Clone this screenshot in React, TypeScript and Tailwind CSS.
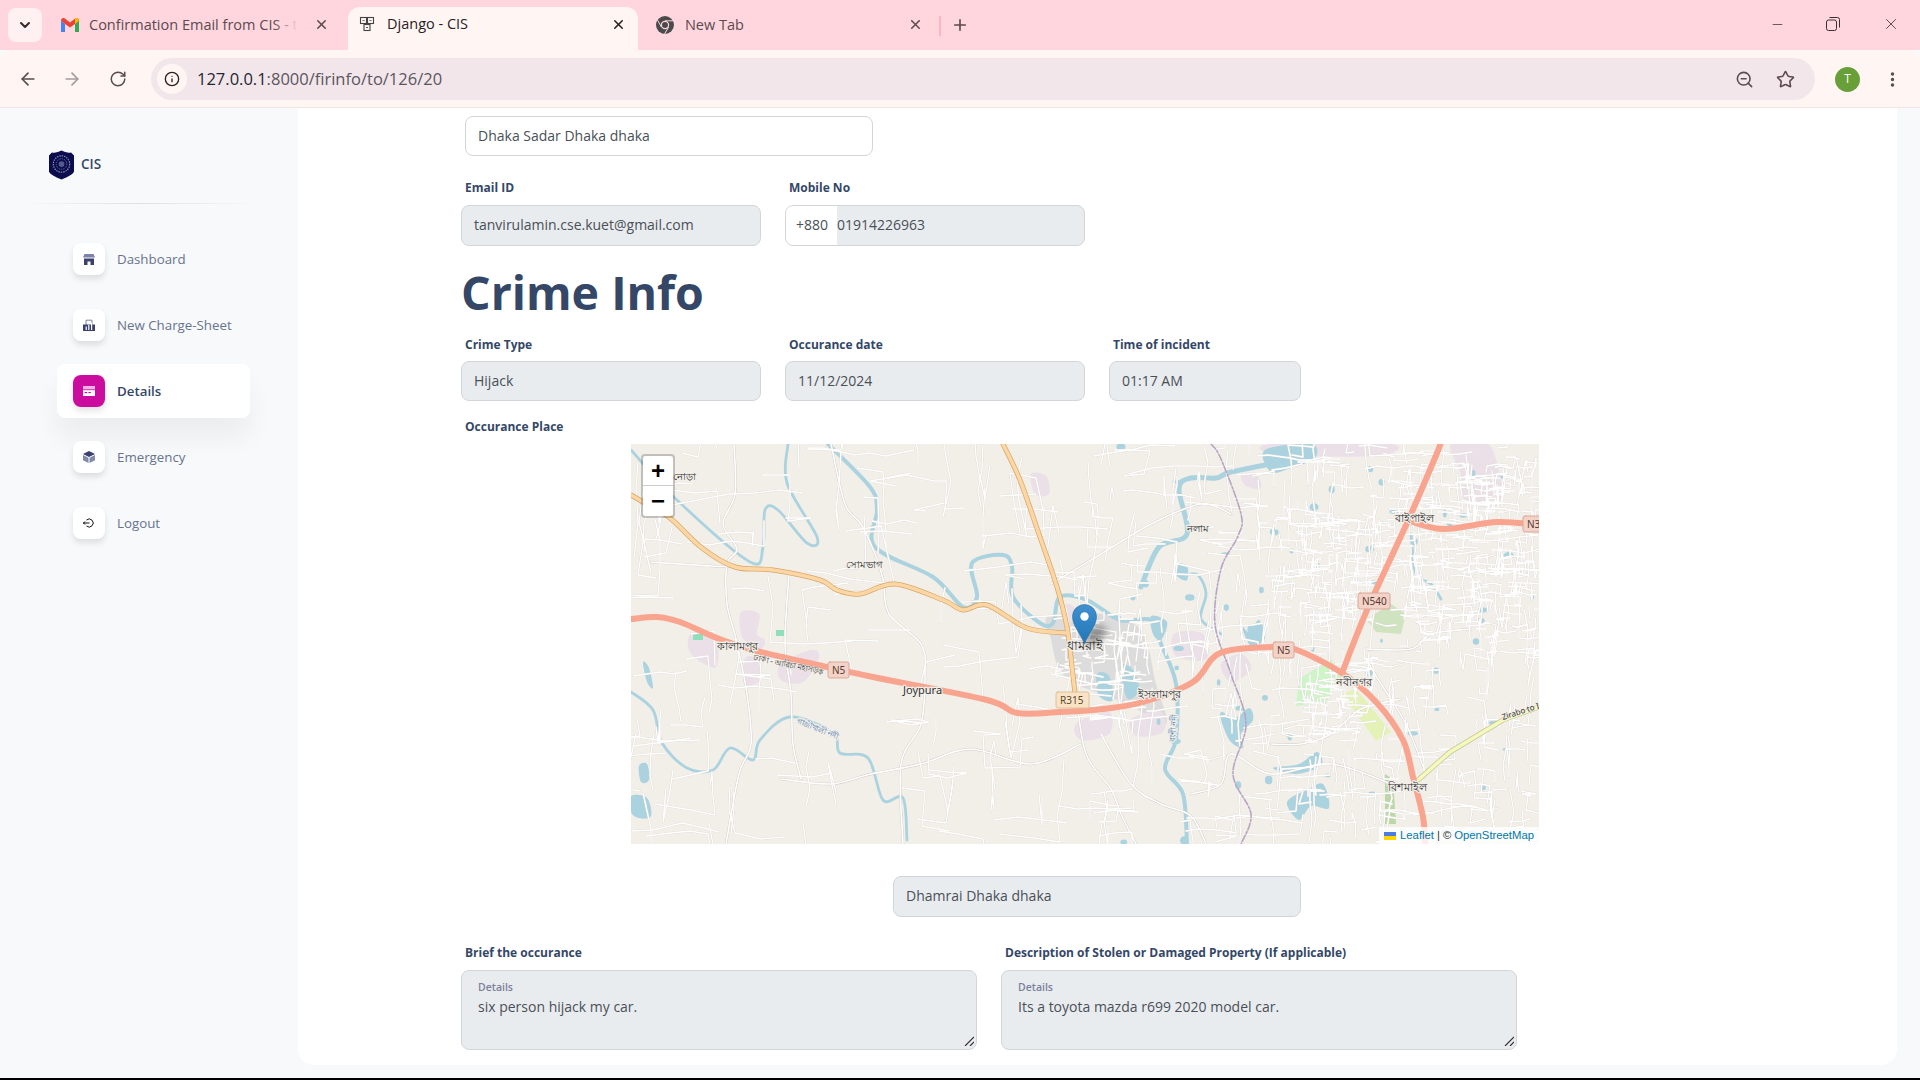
import { ArrowLeft, ArrowRight, ChevronDown, Info, Minus, MoreVertical, Plus, RotateCw, Star, X, ZoomOut } from "lucide-react";

const pts = (a: number[][]) => a.map((p) => p.join(",")).join(" ");

// catmull-rom through the points, so rivers and roads don't look like zigzags
function smooth(a: number[][], closed = false) {
  const at = (i: number) => (closed ? a[(i + a.length) % a.length] : a[Math.max(0, Math.min(a.length - 1, i))]);
  let d = `M${a[0][0]} ${a[0][1]}`;
  const end = closed ? a.length : a.length - 1;
  for (let i = 0; i < end; i++) {
    const [p0, p1, p2, p3] = [at(i - 1), at(i), at(i + 1), at(i + 2)];
    const c1x = p1[0] + (p2[0] - p0[0]) / 6;
    const c1y = p1[1] + (p2[1] - p0[1]) / 6;
    const c2x = p2[0] - (p3[0] - p1[0]) / 6;
    const c2y = p2[1] - (p3[1] - p1[1]) / 6;
    d += `C${c1x.toFixed(1)} ${c1y.toFixed(1)} ${c2x.toFixed(1)} ${c2y.toFixed(1)} ${p2[0]} ${p2[1]}`;
  }
  return closed ? d + "Z" : d;
}

// map data, in px inside the 908x400 map pane
const orangeRoads = [
  [[0, 51], [12, 58], [39, 74], [71, 104], [104, 123], [142, 126], [189, 136], [206, 146], [229, 150], [264, 140], [312, 156], [332, 166], [356, 161], [396, 184], [436, 189]],
  [[372, 0], [389, 36], [409, 93], [426, 143], [436, 183], [441, 223], [444, 249]],
];
const redRoads = [
  [[0, 175], [26, 173], [49, 178], [86, 194], [122, 206], [196, 223], [242, 233], [356, 256], [386, 269], [429, 268], [472, 265], [512, 258], [562, 238], [589, 209], [642, 203], [666, 206], [711, 229], [746, 259], [772, 296], [782, 333], [792, 373], [794, 400]],
  [[711, 229], [736, 166], [776, 79], [806, 9], [809, 0]],
  [[776, 76], [812, 85], [866, 78], [908, 81]],
];
const rivers = [
  [[0, 6], [46, 56], [119, 118], [132, 103], [134, 66], [147, 66], [176, 99], [186, 93], [156, 39], [157, 0]],
  [[197, 0], [239, 43], [246, 66], [244, 103], [302, 133], [332, 163], [346, 153], [341, 119], [372, 111], [381, 123], [382, 153], [409, 179], [422, 179], [429, 153], [456, 156], [489, 176], [520, 176], [530, 200], [545, 240], [545, 295], [534, 325], [552, 350], [556, 400]],
  [[0, 248], [22, 266], [31, 299], [56, 324], [82, 326], [99, 304], [122, 316], [129, 296], [159, 273], [202, 289], [209, 309], [237, 314], [252, 356], [272, 354], [276, 396]],
  [[510, 143], [528, 103], [556, 90], [548, 45], [560, 34], [585, 34], [600, 28], [650, 18]],
  [[560, 130], [568, 132], [575, 150], [570, 175], [590, 190]],
  [[780, 90], [785, 130], [800, 140], [810, 155]],
];
const lakes = [
  [[634, 6], [680, 0], [684, 14], [660, 24], [640, 28]],
  [[590, 268], [604, 274], [618, 264], [622, 276], [610, 290], [612, 304], [600, 298], [592, 282]],
  [[642, 324], [668, 320], [686, 308], [690, 322], [664, 330]],
  [[656, 358], [676, 346], [692, 340], [698, 364], [680, 362], [668, 376]],
  [[490, 222], [502, 226], [508, 246], [496, 254]],
  [[466, 230], [478, 232], [482, 256], [468, 252]],
  [[0, 352], [16, 354], [20, 372], [8, 374], [0, 368]],
  [[8, 322], [16, 320], [18, 336], [10, 338]],
  [[12, 218], [18, 224], [22, 244], [16, 238]],
  [[546, 120], [556, 122], [556, 136], [546, 132]],
  [[610, 180], [618, 188], [628, 176], [634, 194], [620, 202]],
  [[520, 172], [536, 178], [530, 196], [522, 190]],
];
const pinks = [
  [[110, 168], [128, 170], [126, 190], [134, 196], [130, 205], [118, 200], [110, 190]],
  [[60, 190], [84, 190], [86, 222], [70, 218], [58, 206]],
  [[114, 214], [128, 216], [130, 236], [114, 240]],
  [[150, 220], [180, 206], [188, 214], [172, 238], [150, 236]],
  [[445, 280], [478, 268], [478, 290], [450, 296]],
  [[400, 30], [415, 32], [418, 50], [404, 50]],
  [[435, 160], [445, 165], [445, 178], [436, 175]],
  [[500, 275], [530, 268], [532, 288], [505, 292]],
  [[590, 220], [610, 210], [620, 225], [600, 238]],
  [[640, 0], [760, 0], [745, 12], [645, 10]],
  [[820, 0], [858, 0], [870, 58], [835, 58], [830, 30]],
  [[543, 190], [572, 190], [575, 215], [545, 212]],
  [[610, 30], [625, 30], [630, 44], [615, 42]],
];

const minorRoads = [
  [[103, 0], [104, 50], [92, 80], [106, 105], [96, 120], [96, 160], [105, 195], [116, 250], [120, 300], [108, 330], [95, 400]],
  [[200, 0], [214, 60], [230, 80], [244, 110], [252, 135], [258, 170], [290, 200], [294, 230], [290, 280], [270, 320], [272, 400]],
  [[158, 130], [154, 200], [160, 250], [162, 300], [170, 335]],
  [[20, 118], [80, 122], [104, 122]],
  [[150, 335], [200, 340], [240, 330], [290, 320], [340, 305], [400, 320], [450, 300]],
  [[445, 250], [455, 310], [480, 345], [490, 370], [505, 400]],
  [[420, 140], [470, 110], [520, 80], [570, 60], [600, 70]],
  [[470, 290], [500, 340], [530, 360], [560, 372], [575, 400]],
  [[560, 350], [590, 340], [600, 310], [640, 330], [700, 320], [760, 340]],
  [[640, 300], [670, 300], [700, 290], [730, 265], [770, 255]],
  [[735, 205], [780, 205], [800, 190], [840, 185]],
  [[735, 215], [750, 240], [775, 280], [795, 330]],
];

// the map's dense lane network is only texture: random walks from a fixed seed
let seed = 4211;
const rnd = () => {
  seed = (seed * 16807) % 2147483647;
  return seed / 2147483647;
};
const laneAreas = [
  { x: 0, y: 0, w: 440, h: 400, n: 110, len: 24 },
  { x: 440, y: 0, w: 220, h: 400, n: 150, len: 17 },
  { x: 660, y: 0, w: 248, h: 400, n: 280, len: 12 },
  { x: 770, y: 20, w: 138, h: 190, n: 220, len: 8 },
  { x: 640, y: 70, w: 110, h: 100, n: 110, len: 8 },
  { x: 670, y: 240, w: 60, h: 60, n: 40, len: 6 },
  { x: 430, y: 170, w: 90, h: 70, n: 40, len: 7 },
];
const lanes = laneAreas.flatMap((a) =>
  Array.from({ length: a.n }, () => {
    let px = a.x + rnd() * a.w;
    let py = a.y + rnd() * a.h;
    let dir = Math.floor(rnd() * 4);
    const line = [[Math.round(px), Math.round(py)]];
    const steps = 2 + Math.floor(rnd() * 4);
    for (let s = 0; s < steps; s++) {
      if (rnd() > 0.55) dir = Math.floor(rnd() * 4);
      const l = a.len * (0.5 + rnd());
      const skew = (rnd() - 0.5) * l * 0.5;
      px += dir === 0 ? l : dir === 1 ? -l : skew;
      py += dir === 2 ? l : dir === 3 ? -l : skew;
      line.push([Math.round(px), Math.round(py)]);
    }
    return line;
  }),
);
const ponds = Array.from({ length: 60 }, () => ({
  x: 470 + rnd() * 438,
  y: rnd() * 400,
  rx: 1.5 + rnd() * 4,
  ry: 1.5 + rnd() * 3,
}));

const shields = [
  { x: 197, y: 218, w: 21, t: "N5", f: "#f3d2c8", s: "#dca898", c: "#5a3a30" },
  { x: 425, y: 248, w: 33, t: "R315", f: "#fae3c5", s: "#dcc29a", c: "#5a4a30" },
  { x: 642, y: 198, w: 21, t: "N5", f: "#f3d2c8", s: "#dca898", c: "#5a3a30" },
  { x: 727, y: 149, w: 32, t: "N540", f: "#f3d2c8", s: "#dca898", c: "#5a3a30" },
  { x: 892, y: 72, w: 30, t: "N3", f: "#f3d2c8", s: "#dca898", c: "#5a3a30" },
];

function MapPane() {
  return (
    <div className="relative mx-auto w-[908px] h-[400px] bg-[#f2efe9] overflow-hidden">
      <svg viewBox="0 0 908 400" className="absolute inset-0 w-full h-full" fill="none" strokeLinejoin="round" strokeLinecap="round">
        <path d={smooth([[418, 172], [470, 170], [510, 186], [525, 240], [535, 280], [500, 262], [470, 250], [445, 240], [428, 225], [420, 195]], true)} fill="#dcdcdc" />
        {pinks.map((p, i) => <path key={i} d={smooth(p, true)} fill="#ebdfe8" />)}
        <polygon points="668,235 700,215 711,232 695,258 665,262" fill="#cdf5c6" />
        <polygon points="711,250 725,245 760,288 745,297" fill="#e4f2b8" />
        <polygon points="735,175 760,160 775,170 770,190 745,188" fill="#cfe3c0" />
        <polygon points="754,330 762,335 765,380 754,380" fill="#bcd8a8" />
        <rect x="62" y="190" width="10" height="6" fill="#8ee0bd" />
        <rect x="145" y="186" width="9" height="6" fill="#8ee0bd" />
        {lakes.map((p, i) => <path key={i} d={smooth(p, true)} fill="#aad3df" />)}
        {ponds.map((p, i) => <ellipse key={i} cx={p.x} cy={p.y} rx={p.rx} ry={p.ry} fill="#aad3df" />)}
        {rivers.map((p, i) => <path key={i} d={smooth(p)} stroke="#aad3df" strokeWidth={i === 1 ? 4 : i === 3 ? 5 : 2.8} />)}
        {lanes.map((p, i) => <polyline key={i} points={pts(p)} stroke="#dcd8d2" strokeWidth="2" />)}
        {minorRoads.map((p, i) => <path key={i} d={smooth(p)} stroke="#cfcbc6" strokeWidth="2.4" />)}
        {lanes.map((p, i) => <polyline key={i} points={pts(p)} stroke="#ffffff" strokeWidth="1.3" />)}
        {minorRoads.map((p, i) => <path key={i} d={smooth(p)} stroke="#ffffff" strokeWidth="1.6" />)}
        <path d={smooth([[580, 0], [590, 15], [610, 70], [607, 92], [590, 125], [584, 180], [600, 230], [615, 280], [602, 330], [620, 370], [610, 400]])} stroke="#b8a5c2" strokeWidth="1.6" strokeDasharray="7 2 2 2" />
        <polyline points="787,336 819,308 872,276 908,263" stroke="#c9c79a" strokeWidth="5" />
        <polyline points="787,336 819,308 872,276 908,263" stroke="#f6f9bd" strokeWidth="3.6" />
        {orangeRoads.map((p, i) => <path key={i} d={smooth(p)} stroke="#d8a563" strokeWidth="5" />)}
        {orangeRoads.map((p, i) => <path key={i} d={smooth(p)} stroke="#fcd6a4" strokeWidth="3.6" />)}
        {redRoads.map((p, i) => <path key={i} d={smooth(p)} stroke="#f9a48e" strokeWidth="6" />)}
        <g fontFamily="'Noto Sans', sans-serif" fontSize="11" fill="#333333" stroke="#f2efe9" strokeWidth="2.5" paintOrder="stroke">
          <text x="42" y="36" fontSize="10">নোড়া</text>
          <text x="215" y="124" fontSize="10">সোমভাগ</text>
          <text x="86" y="206">কালামপুর</text>
          <text x="122" y="216" fontSize="8" transform="rotate(12 122 216)" strokeWidth="1">ঢাকা - আরিচা মহাসড়ক</text>
          <text x="436" y="206" fontSize="13">ধামরাই</text>
          <text x="272" y="250" fontSize="11">Joypura</text>
          <text x="507" y="254">ইসলামপুর</text>
          <text x="556" y="88" fontSize="10">নলাম</text>
          <text x="764" y="78">বাইপাইল</text>
          <text x="705" y="242">নবীনগর</text>
          <text x="757" y="347">বিশমাইল</text>
          <text x="165" y="279" fontSize="8" fill="#4a7ab0" transform="rotate(22 165 279)">গাজীখালী নদী</text>
          <text x="544" y="298" fontSize="8" fill="#4a7ab0" transform="rotate(-85 544 298)">বংশী নদী</text>
          <text x="872" y="276" fontSize="8" transform="rotate(-18 872 276)" strokeWidth="1">Zirabo to I</text>
        </g>
        <g fontFamily="'Noto Sans', sans-serif" fontSize="10">
          {shields.map((s) => (
            <g key={s.t + s.x}>
              <rect x={s.x} y={s.y} width={s.w} height="16" rx="2" fill={s.f} stroke={s.s} />
              <text x={s.x + 4} y={s.y + 12} fill={s.c}>{s.t}</text>
            </g>
          ))}
        </g>
      </svg>

      {/* zoom buttons */}
      <div className="absolute left-[10px] top-[10px] w-[34px] rounded border-2 border-black/20 bg-clip-padding font-['Liberation_Sans',sans-serif] font-bold text-black">
        <div className="h-[30px] bg-white rounded-t-sm border-b border-[#ccc] flex items-center justify-center text-[24px]">+</div>
        <div className="h-[30px] bg-white rounded-b-sm flex items-center justify-center text-[24px]">−</div>
      </div>

      {/* marker and its shadow */}
      <div className="absolute left-[452px] top-[184px] w-[24px] h-[14px] rounded-full bg-black/40 blur-[4px] -rotate-[35deg]" />
      <svg viewBox="0 0 25 41" className="absolute left-[441px] top-[160px] w-[25px] h-[41px]">
        <defs>
          <linearGradient id="pin" x1="0" y1="0" x2="0" y2="1">
            <stop offset="0" stopColor="#3f90cf" />
            <stop offset="1" stopColor="#2277b8" />
          </linearGradient>
        </defs>
        <path d="M12.5 40 C9 30 .5 22 .5 12.5 A12 12 0 0 1 24.5 12.5 C24.5 22 16 30 12.5 40Z" fill="url(#pin)" stroke="#2a6fa5" strokeWidth=".6" />
        <circle cx="12.5" cy="12.5" r="4.2" fill="#ffffff" />
      </svg>

      {/* attribution */}
      <div className="absolute right-0 bottom-0 bg-white/80 px-[5px] h-[17px] flex items-center gap-[3px] text-[11.3px] leading-none text-[#333] font-['Liberation_Sans',sans-serif]">
        <svg viewBox="0 0 12 8" className="w-3 h-2 mr-px"><rect width="12" height="4" fill="#4c7be1" /><rect y="4" width="12" height="4" fill="#ffd500" /></svg>
        <span className="text-[#0078a8]">Leaflet</span>
        <span>|</span>
        <span>©</span>
        <span className="text-[#0078a8]">OpenStreetMap</span>
      </div>
    </div>
  );
}

function DjangoFavicon() {
  return (
    <svg viewBox="0 0 16 16" className="w-4 h-4" fill="none" stroke="#444" strokeWidth="1.1">
      <rect x="1.5" y="1.5" width="6" height="6" />
      <rect x="8.5" y="1.5" width="6" height="6" />
      <rect x="5" y="8.5" width="6" height="6" />
      <path d="M3.5 5l1-1 1 1M10.5 5l1-1 1 1M7 11l1 1 1-1" strokeWidth=".9" />
    </svg>
  );
}

function GmailFavicon() {
  return (
    <svg viewBox="0 0 18 14" className="w-[18px] h-[14px]">
      <path d="M0 2.5V14h4V6z" fill="#4285f4" />
      <path d="M14 6v8h4V2.5z" fill="#34a853" />
      <path d="M0 2.5C0 .5 2.2-.6 3.8.6L9 4.6l5.2-4C15.8-.6 18 .5 18 2.5L14 6 9 9.6 4 6z" fill="#ea4335" />
      <path d="M14 6V1.2l.2-.6C15.8-.6 18 .5 18 2.5z" fill="#fbbc04" />
    </svg>
  );
}

function ChromeFavicon() {
  return (
    <svg viewBox="0 0 18 18" className="w-[18px] h-[18px]">
      <circle cx="9" cy="9" r="9" fill="#4a4a4c" />
      <circle cx="9" cy="9" r="4.2" fill="#ffd6de" />
      <circle cx="9" cy="9" r="3" fill="#4a4a4c" />
      <path d="M9 4.8h8M5.4 11.1 1.6 4.2M12.6 11.1 8.6 18" stroke="#ffd6de" strokeWidth="1" />
    </svg>
  );
}

function BrowserChrome() {
  return (
    <div className="shrink-0 font-['Open_Sans',sans-serif]">
      <div className="h-[50px] bg-[#ffd6de] flex items-end relative">
        <div className="absolute left-2 top-2 w-[34px] h-[34px] rounded-lg bg-[#fff0f2] flex items-center justify-center">
          <ChevronDown size={16} strokeWidth={3} className="text-[#33282a]" />
        </div>
        <div className="ml-[61px] w-[271px] h-[42px] pb-[9px] flex items-center text-[14.5px] text-[#5b4a4e]">
          <GmailFavicon />
          <div className="relative ml-[10px] w-[209px] whitespace-nowrap overflow-hidden">
            Confirmation Email from CIS - t
            <div className="absolute right-0 top-0 h-full w-[24px] bg-gradient-to-r from-transparent to-[#ffd6de]" />
          </div>
          <X size={15} strokeWidth={2.5} className="ml-[16px] text-[#5b4a4e]" />
        </div>
        <div className="ml-[16px] w-[290px] h-[43px] pb-[9px] bg-[#fff6f4] rounded-t-xl flex items-center pl-[11px] text-[14.5px] text-[#2a2022]">
          <DjangoFavicon />
          <span className="ml-[12px] w-[224px]">Django - CIS</span>
          <X size={15} strokeWidth={2.5} className="text-[#2a2022]" />
        </div>
        <div className="ml-[18px] w-[267px] h-[42px] pb-[9px] flex items-center text-[14.5px] text-[#5b4a4e]">
          <ChromeFavicon />
          <span className="ml-[11px] w-[224px]">New Tab</span>
          <X size={15} strokeWidth={2.5} />
        </div>
        <div className="ml-[16px] mb-[14px] w-[2px] h-[20px] bg-[#fdb5c1]" />
        <Plus size={18} strokeWidth={2.2} className="ml-[10px] mb-[16px] text-[#5b4a4e]" />
        <div className="ml-auto h-full flex items-start text-[#3a2f31]">
          <Minus size={15} strokeWidth={1.2} className="mt-[17px] mr-[41px]" />
          <svg viewBox="0 0 14 14" className="w-[14px] h-[14px] mt-[17px] mr-[42px]" fill="none" stroke="currentColor" strokeWidth="1">
            <rect x=".5" y="3" width="10" height="10.5" rx="2" />
            <path d="M3.5 .5h8a2 2 0 0 1 2 2v8" />
          </svg>
          <X size={18} strokeWidth={1.1} className="mt-[15px] mr-[20px]" />
        </div>
      </div>
      <div className="h-[58px] bg-[#fff6f4] rounded-t-xl flex items-center text-[#5b4a4e] shadow-[inset_0_-1px_0_#f2e3e3]">
        <ArrowLeft size={20} strokeWidth={2} className="ml-[18px]" />
        <ArrowRight size={20} strokeWidth={2} className="ml-[24px] text-[#a59a9c]" />
        <RotateCw size={18} strokeWidth={2} className="ml-[27px]" />
        <div className="ml-[24px] w-[1664px] h-[42px] rounded-full bg-[#f2e6ea] flex items-center">
          <div className="ml-[6px] w-[30px] h-[30px] rounded-full bg-[#fff6f4] flex items-center justify-center">
            <Info size={16} strokeWidth={2} className="text-[#2a2022]" />
          </div>
          <span className="ml-[10px] mt-px text-[16.5px] text-[#5b5560]"><span className="text-[#1f2730]">127.0.0.1</span>:8000/firinfo/to/126/20</span>
          <ZoomOut size={19} strokeWidth={2} className="ml-auto mr-[22px]" />
          <Star size={19} strokeWidth={2} className="mr-[20px]" />
        </div>
        <div className="ml-[20px] w-[25px] h-[25px] rounded-full bg-[#689f38] text-white text-[12px] flex items-center justify-center">T</div>
        <MoreVertical size={19} strokeWidth={2.4} className="ml-[23px]" />
      </div>
    </div>
  );
}

const navItems = [
  { label: "Dashboard", icon: "shop" },
  { label: "New Charge-Sheet", icon: "office" },
  { label: "Details", icon: "card", active: true },
  { label: "Emergency", icon: "box" },
  { label: "Logout", icon: "logout" },
];

function NavIcon({ name }: { name: string }) {
  if (name === "shop") {
    return (
      <svg viewBox="0 0 12 12" className="w-3 h-3">
        <path d="M1.5 1h9L12 4.5H0z" fill="#7d83a8" />
        <path d="M1 5.5h10V12H7.5V8.5h-3V12H1z" fill="#3a416f" />
      </svg>
    );
  }
  if (name === "office") {
    return (
      <svg viewBox="0 0 12 12" className="w-3 h-3">
        <path d="M3 6V1.2h6V6" fill="none" stroke="#7d83a8" strokeWidth="1" />
        <path d="M0 5.5h12V12H0z" fill="#3a416f" />
        <path d="M2.6 7.5h1.2V11H2.6zM5.2 6h1.2v5H5.2zM8 4h1.2v7H8z" fill="#ffffff" />
      </svg>
    );
  }
  if (name === "card") {
    return (
      <svg viewBox="0 0 12 10" className="w-3 h-[10px]">
        <rect width="12" height="3.4" fill="#f6b2e2" />
        <rect y="4.2" width="12" height="5.8" fill="#ffffff" />
        <rect x="1.6" y="6" width="2.4" height="1.2" fill="#cb0c9f" />
        <rect x="5.4" y="6" width="2.4" height="1.2" fill="#cb0c9f" />
      </svg>
    );
  }
  if (name === "box") {
    return (
      <svg viewBox="0 0 12 12" className="w-3 h-3">
        <path d="M6 0l6 3-6 3-6-3z" fill="#3a416f" />
        <path d="M0 4l5.5 2.8V12L0 9.2zM12 4L6.5 6.8V12L12 9.2z" fill="#8389ab" />
      </svg>
    );
  }
  return (
    <svg viewBox="0 0 12 12" className="w-3 h-3" fill="none" stroke="#111" strokeWidth="1">
      <path d="M3.5 3a4 4 0 1 1 0 6" />
      <path d="M0 6h6.5M2 4.5L.5 6 2 7.5" />
    </svg>
  );
}

function Sidebar() {
  return (
    <aside className="w-[298px] shrink-0 pt-[42px] font-['Open_Sans',sans-serif]">
      <div className="flex items-center pl-[49px] h-[30px]">
        <svg viewBox="0 0 26 30" className="w-[25px] h-[30px]">
          <path d="M3 2 Q8 3 13 0 Q18 3 23 2 L26 5 V22 Q24 26 13 30 Q2 26 0 22 V5Z" fill="#0b0d4f" />
          <circle cx="13" cy="14" r="8.5" fill="none" stroke="#8d93b6" strokeWidth="1.2" strokeDasharray="1.5 1" />
          <circle cx="13" cy="14" r="5.5" fill="none" stroke="#6d73a0" strokeWidth="1" strokeDasharray="1 1" />
          <circle cx="13" cy="14" r="3" fill="#565b8e" />
        </svg>
        <span className="ml-[7px] -mt-[2px] text-[13.5px] font-semibold text-[#344767]">CIS</span>
      </div>
      <div className="mt-[23px] ml-[20px] w-[240px] h-px bg-gradient-to-r from-transparent via-black/10 to-transparent" />
      <nav className="mt-[28px] flex flex-col gap-3 ml-[57px] w-[193px]">
        {navItems.map((item) => (
          <div key={item.label} className={`h-[54px] rounded-lg flex items-center pl-4 text-[13.3px] ${item.active ? "bg-white shadow-[0_20px_27px_rgba(0,0,0,0.05)] font-semibold text-[#344767]" : "text-[#67748e]"}`}>
            <div className={`w-8 h-8 rounded-lg flex items-center justify-center shadow-[0_4px_6px_rgba(0,0,0,0.11)] ${item.active ? "bg-[#cb0c9f]" : "bg-white"}`}>
              <NavIcon name={item.icon} />
            </div>
            <span className="ml-3 mt-px">{item.label}</span>
          </div>
        ))}
      </nav>
    </aside>
  );
}

function Field({ value, className = "" }: { value: string; className?: string }) {
  return (
    <div className={`rounded-lg border border-[#d2d6da] bg-[#e9ecef] px-3 pb-px flex items-center text-sm text-[#495057] ${className}`}>
      {value}
    </div>
  );
}

function Label({ children, className = "" }: { children: string; className?: string }) {
  return <div className={`text-xs font-bold text-[#344767] leading-none ${className}`}>{children}</div>;
}

function DetailsBox({ value }: { value: string }) {
  return (
    <div className="relative h-[80px] rounded-lg border border-[#d2d6da] bg-[#e9ecef] px-4 pt-[11px]">
      <div className="text-[10.5px] font-semibold leading-none text-[#7b809a]">Details</div>
      <div className="mt-[4px] text-sm leading-5 text-[#495057]">{value}</div>
      <svg viewBox="0 0 10 10" className="absolute right-[2px] bottom-[3px] w-[10px] h-[10px]" stroke="#333" strokeWidth="1.2">
        <path d="M1 10L10 1M6 10l4-4" />
      </svg>
    </div>
  );
}

export default function App() {
  return (
    <div className="w-[1920px] h-[1080px] overflow-hidden flex flex-col bg-[#f8f9fa] border-b-2 border-black">
      <BrowserChrome />
      <div className="flex-1 flex min-h-0">
        <Sidebar />
        <main className="w-[1599px] h-[957px] bg-white rounded-b-2xl pt-2 pl-[163px] font-['Open_Sans',sans-serif]">
          <div className="ml-[4px] w-[408px] h-[40px] rounded-lg border border-[#d2d6da] bg-white px-3 flex items-center text-sm text-[#495057]">Dhaka Sadar Dhaka dhaka</div>

          <div className="mt-[26px] flex gap-[24px]">
            <div className="w-[300px]">
              <Label className="ml-[4px]">Email ID</Label>
              <Field value="tanvirulamin.cse.kuet@gmail.com" className="mt-[11px] h-[41px]" />
            </div>
            <div className="w-[300px]">
              <Label className="ml-[4px]">Mobile No</Label>
              <div className="mt-[11px] h-[41px] rounded-lg border border-[#d2d6da] bg-[#e9ecef] flex items-center overflow-hidden text-sm text-[#495057]">
                <div className="w-[51px] h-full bg-white flex items-center pl-[10px] pb-px">+880</div>
                <span className="pb-px">01914226963</span>
              </div>
            </div>
          </div>

          <h1 className="mt-[16px] text-[46.5px] leading-[60px] font-bold text-[#344767]">Crime Info</h1>

          <div className="mt-[17px] flex gap-[24px]">
            <div className="w-[300px]">
              <Label className="ml-[4px]">Crime Type</Label>
              <Field value="Hijack" className="mt-[10px] h-[40px]" />
            </div>
            <div className="w-[300px]">
              <Label className="ml-[4px]">Occurance date</Label>
              <Field value="11/12/2024" className="mt-[10px] h-[40px]" />
            </div>
            <div className="w-[192px]">
              <Label className="ml-[4px]">Time of incident</Label>
              <Field value="01:17 AM" className="mt-[10px] h-[40px]" />
            </div>
          </div>

          <Label className="mt-[20px] ml-[4px]">Occurance Place</Label>
          <div className="mt-[11px] ml-[170px] w-[908px]">
            <MapPane />
          </div>

          <Field value="Dhamrai Dhaka dhaka" className="mt-[32px] ml-[432px] w-[408px] h-[41px]" />

          <div className="mt-[30px] grid grid-cols-[516px_516px] gap-x-[24px]">
            <div>
              <Label className="ml-[4px]">Brief the occurance</Label>
              <div className="mt-[11px]"><DetailsBox value="six person hijack my car." /></div>
            </div>
            <div>
              <Label className="ml-[4px]">Description of Stolen or Damaged Property (If applicable)</Label>
              <div className="mt-[11px]"><DetailsBox value="Its a toyota mazda r699 2020 model car." /></div>
            </div>
          </div>
        </main>
      </div>
    </div>
  );
}
